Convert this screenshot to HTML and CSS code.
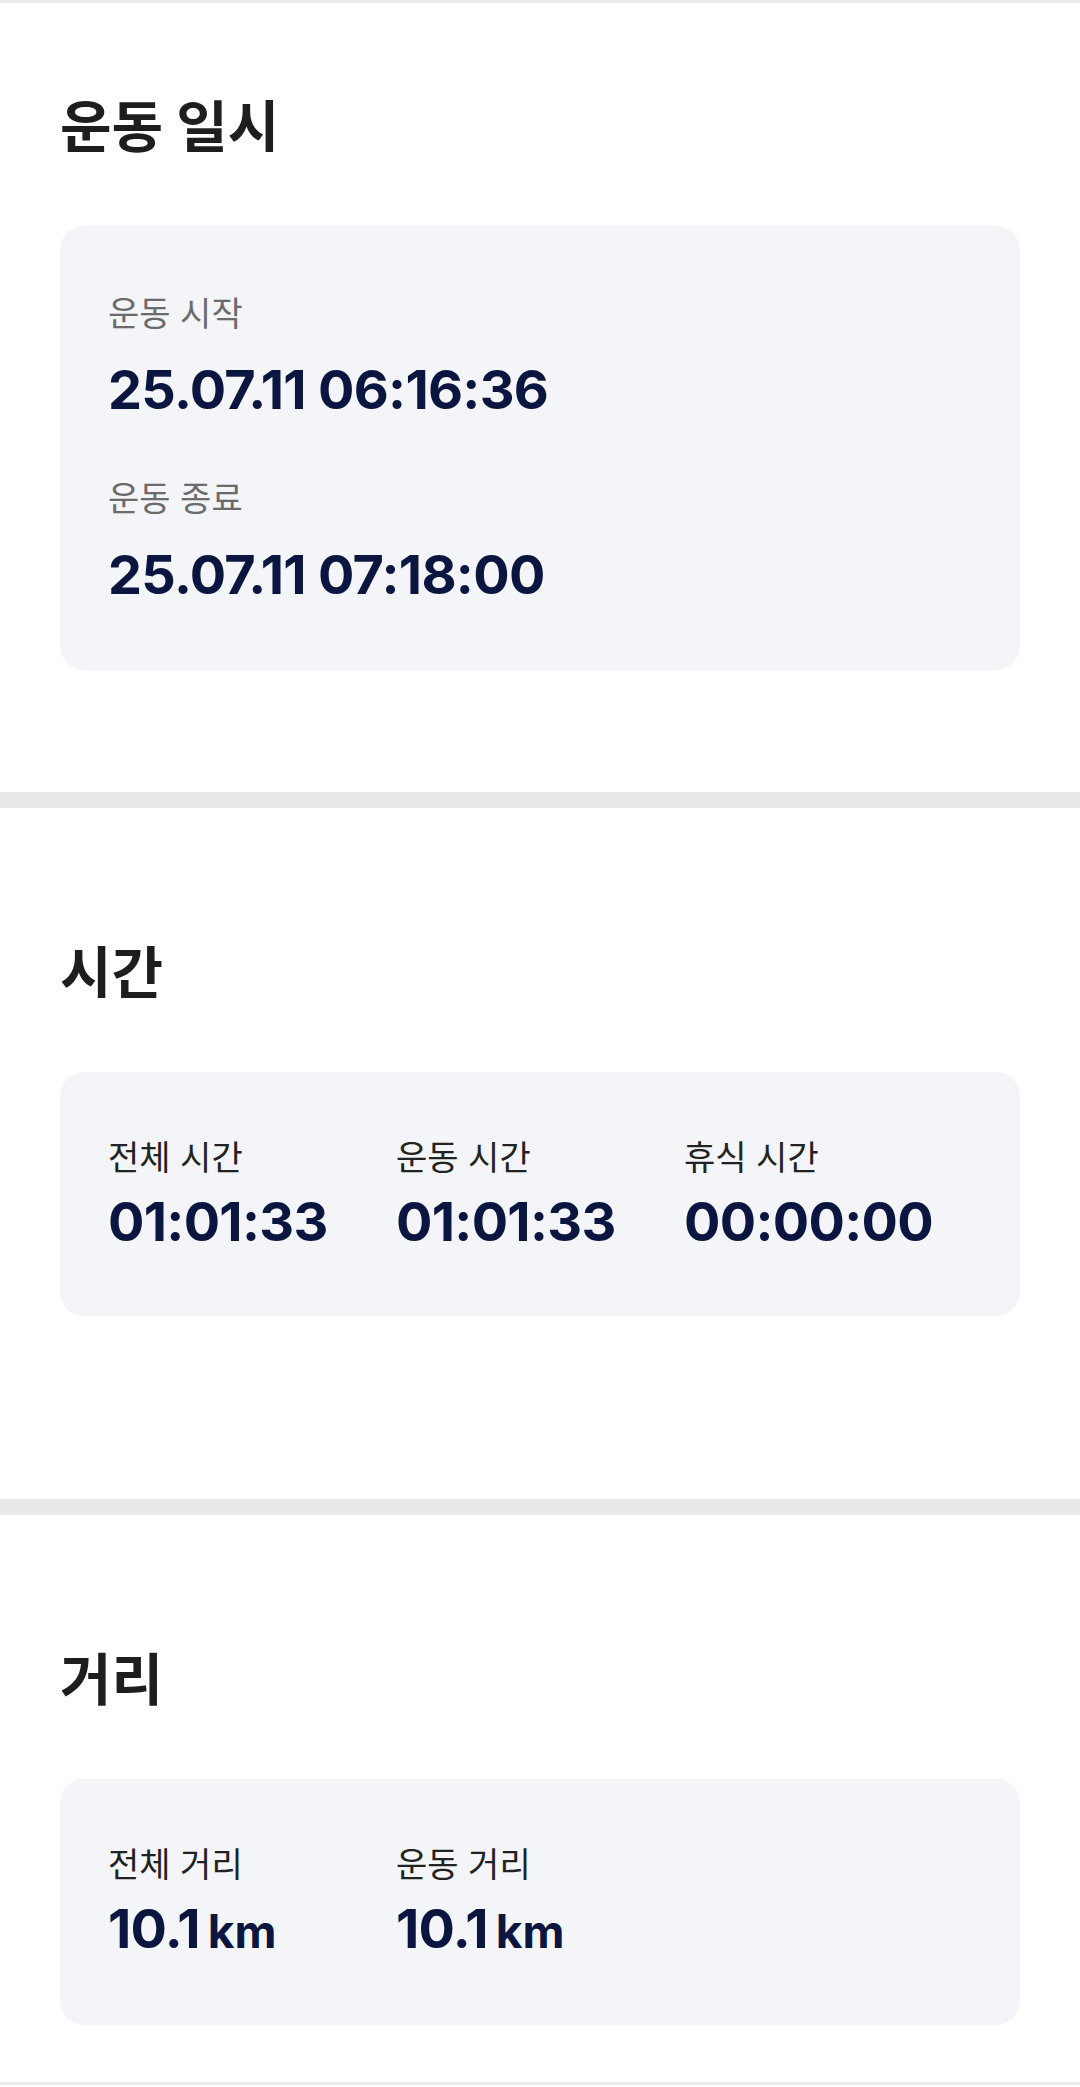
FILE: index.html
```html
<!DOCTYPE html>
<html lang="ko">
<head>
    <meta charset="UTF-8">
    <meta name="viewport" content="width=device-width, initial-scale=1.0">
    <title>운동 기록</title>
    <link rel="stylesheet" href="styles.css">
</head>
<body>
    <div class="page">
        <section class="section section-first">
            <h2 class="section-title">운동 일시</h2>
            <div class="card card-stack">
                <div class="stat">
                    <div class="stat-label muted">운동 시작</div>
                    <div class="stat-value">25.07.11 06:16:36</div>
                </div>
                <div class="stat">
                    <div class="stat-label muted">운동 종료</div>
                    <div class="stat-value">25.07.11 07:18:00</div>
                </div>
            </div>
        </section>

        <div class="divider"></div>

        <section class="section section-time">
            <h2 class="section-title">시간</h2>
            <div class="card card-grid">
                <div class="stat">
                    <div class="stat-label">전체 시간</div>
                    <div class="stat-value">01:01:33</div>
                </div>
                <div class="stat">
                    <div class="stat-label">운동 시간</div>
                    <div class="stat-value">01:01:33</div>
                </div>
                <div class="stat">
                    <div class="stat-label">휴식 시간</div>
                    <div class="stat-value">00:00:00</div>
                </div>
            </div>
        </section>

        <div class="divider"></div>

        <section class="section section-distance">
            <h2 class="section-title">거리</h2>
            <div class="card card-grid">
                <div class="stat">
                    <div class="stat-label">전체 거리</div>
                    <div class="stat-value">10.1<span class="unit">km</span></div>
                </div>
                <div class="stat">
                    <div class="stat-label">운동 거리</div>
                    <div class="stat-value">10.1<span class="unit">km</span></div>
                </div>
            </div>
        </section>

        <div class="divider divider-thin"></div>
    </div>
</body>
</html>
```

FILE: styles.css
```css
body {
    margin: 0;
    background-color: #ffffff;
    font-family: Inter, "Noto Sans CJK KR", sans-serif;
    color: #1e1e1e;
}
.page {
    border-top: 3px solid #ebebeb;
}
.section {
    padding: 133px 60px 0;
}
.section-first {
    padding-top: 92px;
    padding-bottom: 122px;
}
.section-time {
    padding-bottom: 183px;
}
.section-distance {
    padding-bottom: 57px;
}
.section-title {
    margin: 0 0 67px;
    font-size: 56px;
    line-height: 64px;
    font-weight: 700;
    color: #1e1e1e;
}
.card {
    background-color: #f3f5f9;
    border-radius: 24px;
    padding: 66px 48px 62px;
}
.card-stack {
    display: flex;
    flex-direction: column;
    gap: 57px;
    padding-top: 68px;
    padding-bottom: 63px;
}
.card-stack .stat {
    display: flex;
    flex-direction: column;
    gap: 24px;
}
.card-grid {
    display: grid;
    grid-template-columns: repeat(3, 1fr);
}
.card-grid .stat {
    display: flex;
    flex-direction: column;
    gap: 12px;
}
.stat-label {
    font-size: 34px;
    line-height: 40px;
    font-weight: 400;
    color: #222222;
}
.stat-label.muted {
    color: #6b6b6b;
}
.stat-value {
    font-size: 54px;
    line-height: 64px;
    font-weight: 700;
    letter-spacing: -0.7px;
    color: #0b1640;
}
.unit {
    font-size: 46px;
    margin-left: 8px;
    letter-spacing: 0;
}
.divider {
    height: 16px;
    background-color: #e9e9e9;
}
.divider-thin {
    height: 3px;
}
```
